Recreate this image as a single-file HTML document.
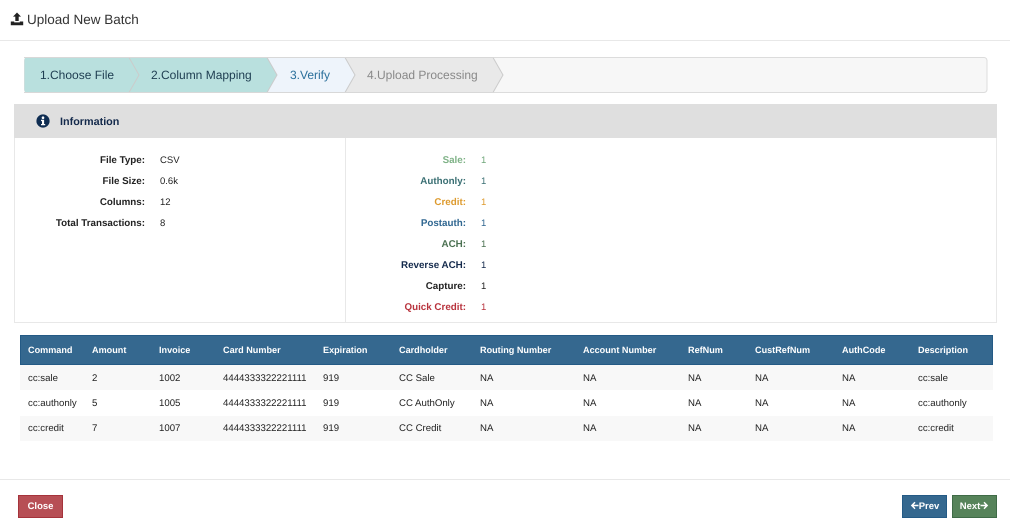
<!DOCTYPE html>
<html><head><meta charset="utf-8"><style>
html,body{margin:0;padding:0;background:#fff}
body{width:1010px;height:532px;position:relative;overflow:hidden;font-family:"Liberation Sans",Arial,sans-serif;color:#222;text-rendering:geometricPrecision}
.a{position:absolute;white-space:nowrap}
.l{position:absolute;white-space:nowrap;font-size:9.8px;font-weight:bold;text-align:right;line-height:14px}
.v{position:absolute;white-space:nowrap;font-size:9.5px;line-height:14px}
.s{position:absolute;white-space:nowrap;font-size:12px;line-height:16px;top:67px}
.th{position:absolute;white-space:nowrap;font-size:9.1px;font-weight:bold;color:#fff;top:343px;line-height:14px}
.td{position:absolute;white-space:nowrap;font-size:9.65px;color:#222;line-height:14px}
.btn{position:absolute;box-sizing:border-box;color:#fff;font-size:9.5px;font-weight:bold;text-align:center}
</style></head><body>
<svg class="a" style="left:10px;top:12px" width="15" height="14" viewBox="0 0 15 14"><path d="M7 0.5 L11 4.6 H8.7 V9 H5.3 V4.6 H3 Z" fill="#222"/><path d="M0.8 9.5 H4.2 V10.4 H9.8 V9.5 H13.2 V13.2 H0.8 Z" fill="#222"/></svg>
<div class="a" style="left:27px;top:11px;font-size:13.5px;line-height:17px;color:#333">Upload New Batch</div>
<div class="a" style="left:0;top:40px;width:1010px;height:1px;background:#e8e8e8"></div>

<svg class="a" style="left:24px;top:57px" width="964" height="36" viewBox="0 0 964 36">
<rect x=".5" y=".5" width="962.500" height="35" rx="3" fill="#f7f7f7" stroke="#dcdcdc"/>
<path d="M469 .5 L479 18 L469 35.500 H321 L331 18 L321 .5 Z" fill="#e9e9e9"/>
<path d="M321 .5 L331 18 L321 35.500 H243 L253 18 L243 .5 Z" fill="#eef4fb"/>
<path d="M243 .5 L253 18 L243 35.500 H105 L115 18 L105 .5 Z" fill="#b9e0de"/>
<path d="M105 .5 L115 18 L105 35.500 H3 Q.5 35.500 .5 33 V3 Q.5 .5 3 .5 Z" fill="#b9e0de"/>
<path d="M105 .5 L115 18 L105 35.500 M243 .5 L253 18 L243 35.500 M321 .5 L331 18 L321 35.500 M469 .5 L479 18 L469 35.500" fill="none" stroke="#cbcbcb"/>
<path d="M0 .5H470M0 35.500H470" stroke="#d8d8d8" fill="none"/>
</svg>
<div class="s" style="left:40px;color:#1d3c50">1.Choose File</div>
<div class="s" style="left:151px;color:#1d3c50">2.Column Mapping</div>
<div class="s" style="left:290px;color:#2a6f9b">3.Verify</div>
<div class="s" style="left:367px;color:#888">4.Upload Processing</div>

<div class="a" style="left:14px;top:104px;width:983px;height:219px;box-sizing:border-box;border:1px solid #e8e8e8;border-top:0"></div>
<div class="a" style="left:14px;top:104px;width:983px;height:34px;background:#dfdfdf"></div>
<div class="a" style="left:345px;top:138px;width:1px;height:184px;background:#e8e8e8"></div>
<svg class="a" style="left:36px;top:114px" width="14" height="14" viewBox="0 0 14 14"><circle cx="7" cy="7" r="6.6" fill="#0f2d52"/><circle cx="7" cy="3.700" r="1.300" fill="#fff"/><path d="M5 5.800H8.100V10H9.200V11.300H5V10H6V7.100H5Z" fill="#fff"/></svg>
<div class="a" style="left:60px;top:115px;font-size:10.8px;font-weight:bold;color:#13294b;line-height:15px">Information</div>

<div class="l" style="right:865px;top:154px;color:#222">File Type:</div><div class="v" style="left:160px;top:154px">CSV</div>
<div class="l" style="right:865px;top:175px;color:#222">File Size:</div><div class="v" style="left:160px;top:175px">0.6k</div>
<div class="l" style="right:865px;top:196px;color:#222">Columns:</div><div class="v" style="left:160px;top:196px">12</div>
<div class="l" style="right:865px;top:217px;color:#222">Total Transactions:</div><div class="v" style="left:160px;top:217px">8</div>

<div class="l" style="right:544px;top:154px;color:#7fb287">Sale:</div><div class="v" style="left:481px;top:154px;color:#6fa67a">1</div>
<div class="l" style="right:544px;top:175px;color:#3a6f73">Authonly:</div><div class="v" style="left:481px;top:175px;color:#3a6f73">1</div>
<div class="l" style="right:544px;top:196px;color:#dd9a2d">Credit:</div><div class="v" style="left:481px;top:196px;color:#dd9a2d">1</div>
<div class="l" style="right:544px;top:217px;color:#2f6690">Postauth:</div><div class="v" style="left:481px;top:217px;color:#2f6690">1</div>
<div class="l" style="right:544px;top:238px;color:#4a7050">ACH:</div><div class="v" style="left:481px;top:238px;color:#4a7050">1</div>
<div class="l" style="right:544px;top:259px;color:#13294b">Reverse ACH:</div><div class="v" style="left:481px;top:259px;color:#13294b">1</div>
<div class="l" style="right:544px;top:280px;color:#222">Capture:</div><div class="v" style="left:481px;top:280px;color:#222">1</div>
<div class="l" style="right:544px;top:301px;color:#b8323c">Quick Credit:</div><div class="v" style="left:481px;top:301px;color:#b8323c">1</div>

<div class="a" style="left:20px;top:335px;width:973px;height:30px;box-sizing:border-box;background:#35688f;border:1px solid #245a85"></div>
<div class="a" style="left:20px;top:365px;width:973px;height:25px;background:#f8f8f8"></div>
<div class="a" style="left:20px;top:416px;width:973px;height:25px;background:#f8f8f8"></div>

<div class="th" style="left:28px">Command</div><div class="th" style="left:92px">Amount</div><div class="th" style="left:159px">Invoice</div><div class="th" style="left:223px">Card Number</div><div class="th" style="left:323px">Expiration</div><div class="th" style="left:399px">Cardholder</div><div class="th" style="left:480px">Routing Number</div><div class="th" style="left:583px">Account Number</div><div class="th" style="left:688px">RefNum</div><div class="th" style="left:755px">CustRefNum</div><div class="th" style="left:842px">AuthCode</div><div class="th" style="left:918px">Description</div>

<div class="td" style="top:372px;left:28px">cc:sale</div><div class="td" style="top:372px;left:92px">2</div><div class="td" style="top:372px;left:159px">1002</div><div class="td" style="top:372px;left:223px">4444333322221111</div><div class="td" style="top:372px;left:323px">919</div><div class="td" style="top:372px;left:399px">CC Sale</div><div class="td" style="top:372px;left:480px">NA</div><div class="td" style="top:372px;left:583px">NA</div><div class="td" style="top:372px;left:688px">NA</div><div class="td" style="top:372px;left:755px">NA</div><div class="td" style="top:372px;left:842px">NA</div><div class="td" style="top:372px;left:918px">cc:sale</div>

<div class="td" style="top:397px;left:28px">cc:authonly</div><div class="td" style="top:397px;left:92px">5</div><div class="td" style="top:397px;left:159px">1005</div><div class="td" style="top:397px;left:223px">4444333322221111</div><div class="td" style="top:397px;left:323px">919</div><div class="td" style="top:397px;left:399px">CC AuthOnly</div><div class="td" style="top:397px;left:480px">NA</div><div class="td" style="top:397px;left:583px">NA</div><div class="td" style="top:397px;left:688px">NA</div><div class="td" style="top:397px;left:755px">NA</div><div class="td" style="top:397px;left:842px">NA</div><div class="td" style="top:397px;left:918px">cc:authonly</div>

<div class="td" style="top:422px;left:28px">cc:credit</div><div class="td" style="top:422px;left:92px">7</div><div class="td" style="top:422px;left:159px">1007</div><div class="td" style="top:422px;left:223px">4444333322221111</div><div class="td" style="top:422px;left:323px">919</div><div class="td" style="top:422px;left:399px">CC Credit</div><div class="td" style="top:422px;left:480px">NA</div><div class="td" style="top:422px;left:583px">NA</div><div class="td" style="top:422px;left:688px">NA</div><div class="td" style="top:422px;left:755px">NA</div><div class="td" style="top:422px;left:842px">NA</div><div class="td" style="top:422px;left:918px">cc:credit</div>

<div class="a" style="left:0;top:479px;width:1010px;height:1px;background:#e8e8e8"></div>
<div class="btn" style="left:18px;width:45px;top:495px;height:23px;background:#b74f55;border:1px solid #a5333b;line-height:21px">Close</div>
<div class="btn" style="left:902px;width:45px;top:495px;height:23px;background:#35688f;border:1px solid #245a85;line-height:21px"><svg width="9" height="9" viewBox="0 0 9 9" style="vertical-align:-1px"><path d="M4.500 .8 L.8 4.500 L4.500 8.200 L5.500 7.200 L3.700 5.300 H8.500 V3.700 H3.700 L5.500 1.800 Z" fill="#fff"/></svg>Prev</div>
<div class="btn" style="left:952px;width:45px;top:495px;height:23px;background:#56835a;border:1px solid #3f6b47;line-height:21px">Next<svg width="9" height="9" viewBox="0 0 9 9" style="vertical-align:-1px"><path d="M4.500 .8 L8.200 4.500 L4.500 8.200 L3.500 7.200 L5.300 5.300 H.5 V3.700 H5.300 L3.500 1.800 Z" fill="#fff"/></svg></div>
</body></html>
